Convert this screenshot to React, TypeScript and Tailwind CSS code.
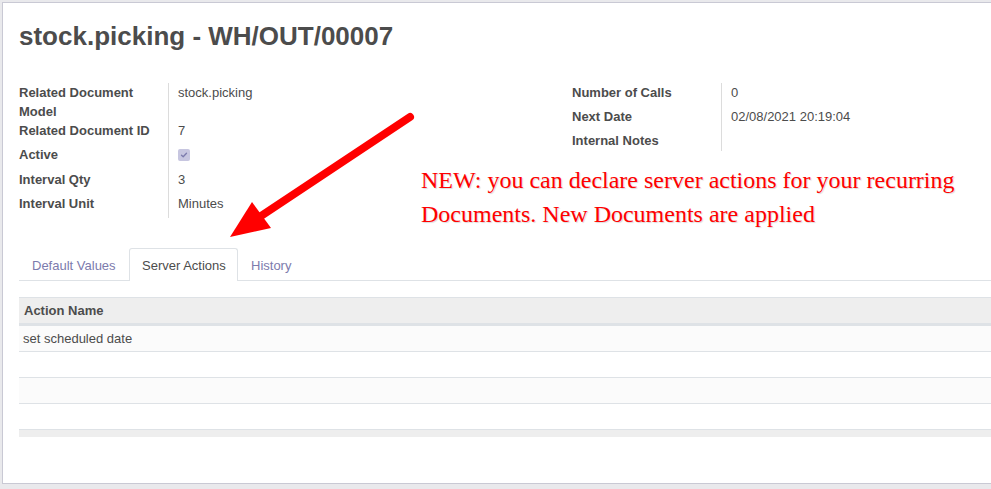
const labelCls = "font-bold text-[13px] leading-[19px] text-[#4c4c4c]";
const valueCls = "text-[13px] leading-[19px] text-[#4c4c4c]";

function FieldRow({ label, value, h }: { label: string; value?: React.ReactNode; h: string }) {
  return (
    <div className={`flex items-start ${h}`}>
      <div className={`w-[150px] pr-[10px] border-r border-[#dcdcdc] self-stretch ${labelCls}`}>{label}</div>
      <div className={`pl-[9px] ${valueCls}`}>{value}</div>
    </div>
  );
}

function Checkbox() {
  return (
    <div className="mt-[4px] w-[12px] h-[12px] rounded-[2px] bg-[#c7c6e0] flex items-center justify-center">
      <svg width="8" height="8" viewBox="0 0 8 8" fill="none">
        <path d="M1.5 4.2L3.2 5.8L6.5 2.2" stroke="#7c7bad" strokeWidth="1.3" strokeLinecap="round" strokeLinejoin="round" />
      </svg>
    </div>
  );
}

export default function App() {
  const rows = ["set scheduled date", "", "", ""];
  return (
    <div className="relative w-[991px] h-[489px] overflow-hidden bg-[#e9e9ec] pt-[2px] pl-[2px] font-['Liberation_Sans',Arial,sans-serif]">
      {/* Sheet */}
      <div className="w-[1010px] h-[482px] bg-white border border-[#c9c9d4] pl-[16px] pt-[18px]">
        <h1 className="text-[26px] leading-[31px] font-bold text-[#4c4c4c]">stock.picking - WH/OUT/00007</h1>

        {/* Field groups */}
        <div className="flex mt-[31px]">
          <div className="w-[553px] flex flex-col">
            <FieldRow label="Related Document Model" value="stock.picking" h="h-[38px]" />
            <FieldRow label="Related Document ID" value="7" h="h-[24px]" />
            <FieldRow label="Active" value={<Checkbox />} h="h-[25px]" />
            <FieldRow label="Interval Qty" value="3" h="h-[24px]" />
            <FieldRow label="Interval Unit" value="Minutes" h="h-[24px]" />
          </div>
          <div className="flex flex-col">
            <FieldRow label="Number of Calls" value="0" h="h-[24px]" />
            <FieldRow label="Next Date" value="02/08/2021 20:19:04" h="h-[24px]" />
            <FieldRow label="Internal Notes" h="h-[20px]" />
          </div>
        </div>

        {/* Tabs */}
        <div className="mt-[30px] flex h-[33px] border-b border-[#dee2e6] text-[13px]">
          <div className="w-[110px] pl-[13px] pt-[8px] text-[#7c7bad]">Default Values</div>
          <div className="w-[109px] pl-[12px] pt-[7px] h-[33px] border border-b-0 border-[#dee2e6] rounded-t-[3px] bg-white text-[#4c4c4c]">
            Server Actions
          </div>
          <div className="pl-[13px] pt-[8px] text-[#7c7bad]">History</div>
        </div>

        {/* Table */}
        <div className="mt-[16px] text-[13px] text-[#4c4c4c]">
          <div className="h-[29px] bg-[#eeeeee] border-t border-[#dee2e6] border-b-[3px] border-b-[#dee2e6] pl-[5px] flex items-center font-bold">
            Action Name
          </div>
          {rows.map((r, i) => (
            <div
              key={i}
              className={`h-[26px] border-b border-[#dee2e6] pl-[4px] flex items-center ${i % 2 === 0 ? "bg-[#fbfbfb]" : "bg-white"}`}
            >
              {r}
            </div>
          ))}
          <div className="h-[7px] bg-[#eeeeee]" />
        </div>
      </div>

      {/* Annotation text */}
      <div className="absolute left-[421px] top-[163px] font-['Liberation_Serif',serif] text-[24px] leading-[34px] text-[#ff0000] [text-shadow:1px_1px_1px_rgba(0,0,0,0.15)]">
        <div>NEW: you can declare server actions for your recurring</div>
        <div>Documents. New Documents are applied</div>
      </div>

      {/* Arrow */}
      <svg className="absolute left-0 top-0" width="991" height="489" viewBox="0 0 991 489" fill="none">
        <line x1="410" y1="117" x2="258" y2="218" stroke="#ff0000" strokeWidth="8" strokeLinecap="round" />
        <polygon points="230,237 252,202 271,228" fill="#ff0000" />
      </svg>
    </div>
  );
}
